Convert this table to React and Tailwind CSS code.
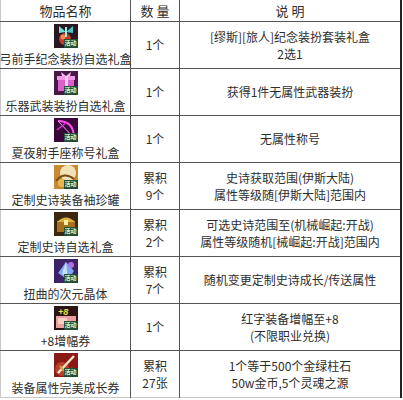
const font = { fontFamily: '"Noto Sans CJK SC", "Noto Sans", sans-serif' };

function Badge() {
  return (
    <span className="absolute right-0 bottom-0 flex h-[9px] w-[14px] items-center justify-center bg-[#234d33] text-[6px] font-bold leading-none text-[#d8f5d0]">
      活动
    </span>
  );
}

function ItemIcon({ kind }) {
  return (
    <div className="relative h-[24px] w-[24px] overflow-hidden bg-[#1e1418]">
      <svg width="24" height="24" viewBox="0 0 24 24" className="block">
        {kind === "bowgift" && (
          <>
            <rect width="24" height="24" fill="#2a1820" />
            <circle cx="11" cy="15" r="6" fill="#c43a2c" />
            <circle cx="9" cy="13" r="2.5" fill="#f08a50" />
            <path d="M12 8 L5 2 L5 9 Z" fill="#6fe0d6" />
            <path d="M12 8 L19 2 L19 9 Z" fill="#4cc4c0" />
            <rect x="11" y="3" width="2" height="10" fill="#8ff0e8" />
          </>
        )}
        {kind === "pinkbox" && (
          <>
            <rect width="24" height="24" fill="#4a1848" />
            <rect x="4" y="7" width="16" height="13" fill="#d863c8" />
            <rect x="3" y="5" width="18" height="4" fill="#f09ae6" />
            <rect x="11" y="5" width="3" height="15" fill="#f8c8f2" />
            <path d="M12 5 L7 1 L8 5 Z M12 5 L17 1 L16 5 Z" fill="#f8b8f0" />
          </>
        )}
        {kind === "bow" && (
          <>
            <rect width="24" height="24" fill="#3a0838" />
            <path d="M4 3 Q20 3 20 20" stroke="#ff4cf0" strokeWidth="2" fill="none" />
            <path d="M4 3 L20 20" stroke="#ff9af8" strokeWidth="1" />
            <path d="M3 12 L13 4" stroke="#e030d8" strokeWidth="1.5" />
          </>
        )}
        {kind === "swirl" && (
          <>
            <rect width="24" height="24" fill="#c88a30" />
            <circle cx="14" cy="8" r="8" fill="#f2e2b8" />
            <path d="M2 16 Q10 6 20 14" stroke="#7a4a18" strokeWidth="2" fill="none" />
            <circle cx="8" cy="18" r="4" fill="#e8b850" />
          </>
        )}
        {kind === "chest" && (
          <>
            <rect width="24" height="24" fill="#3a2810" />
            <rect x="3" y="9" width="18" height="11" fill="#a8701e" />
            <path d="M3 10 Q12 1 21 10 Z" fill="#e0b040" />
            <rect x="10" y="8" width="4" height="5" fill="#fff0a0" />
          </>
        )}
        {kind === "crystal" && (
          <>
            <rect width="24" height="24" fill="#3c2268" />
            <path d="M4 14 L12 3 L20 12 L14 21 Z" fill="#7fa8f0" />
            <path d="M12 3 L14 21 L8 14 Z" fill="#c8e0ff" />
            <circle cx="17" cy="6" r="3" fill="#b070e0" />
          </>
        )}
        {kind === "ticket" && (
          <>
            <rect width="24" height="24" fill="#2a1414" />
            <rect x="2" y="10" width="20" height="12" fill="#e8a0a0" />
            <rect x="4" y="12" width="9" height="6" fill="#f8d0c8" />
            <text x="4" y="9" fontSize="9" fontWeight="bold" fontStyle="italic" fill="#f0e040" fontFamily="Liberation Sans, sans-serif">
              +8
            </text>
          </>
        )}
        {kind === "sword" && (
          <>
            <rect width="24" height="24" fill="#8a1a16" />
            <circle cx="8" cy="16" r="7" fill="#b8402a" />
            <path d="M4 20 L20 3" stroke="#f4e2c0" strokeWidth="2.5" />
            <path d="M6 13 L10 18" stroke="#d8a050" strokeWidth="2" />
            <path d="M12 20 L18 14 L22 20 Z" fill="#3a8a40" />
          </>
        )}
      </svg>
      <Badge />
    </div>
  );
}

const rows = [
  { icon: "bowgift", name: "弓前手纪念装扮自选礼盒", count: ["1个"], desc: ["[缪斯][旅人]纪念装扮套装礼盒", "2选1"] },
  { icon: "pinkbox", name: "乐器武装装扮自选礼盒", count: ["1个"], desc: ["获得1件无属性武器装扮"] },
  { icon: "bow", name: "夏夜射手座称号礼盒", count: ["1个"], desc: ["无属性称号"] },
  { icon: "swirl", name: "定制史诗装备袖珍罐", count: ["累积", "9个"], desc: ["史诗获取范围(伊斯大陆)", "属性等级随[伊斯大陆]范围内"] },
  { icon: "chest", name: "定制史诗自选礼盒", count: ["累积", "2个"], desc: ["可选史诗范围至(机械崛起:开战)", "属性等级随机[械崛起:开战]范围内"] },
  { icon: "crystal", name: "扭曲的次元晶体", count: ["累积", "7个"], desc: ["随机变更定制史诗成长/传送属性"] },
  { icon: "ticket", name: "+8增幅券", count: ["1个"], desc: ["红字装备增幅至+8", "(不限职业兑换)"] },
  { icon: "sword", name: "装备属性完美成长券", count: ["累积", "27张"], desc: ["1个等于500个金绿柱石", "50w金币,5个灵魂之源"] },
];

export default function App() {
  return (
    <div className="h-[400px] w-[403px] overflow-hidden bg-white text-[#2e2e2e]" style={font}>
      <table className="w-[402px] table-fixed border-collapse border-l border-l-[#c8c8c8] border-r-2 border-r-[#222]">
        <colgroup>
          <col className="w-[130px]" />
          <col className="w-[49px]" />
          <col />
        </colgroup>
        <thead>
          <tr className="h-[21px] border-b border-[#555] text-[13px] leading-none">
            <th className="border-r border-[#555] font-normal">物品名称</th>
            <th className="border-r border-[#555] font-normal">数 量</th>
            <th className="font-normal">说 明</th>
          </tr>
        </thead>
        <tbody>
          {rows.map((r, i) => (
            <tr
              key={i}
              className={`h-[47px] border-b ${i === rows.length - 1 ? "border-[#c8c8c8]" : "border-[#555]"}`}
            >
              <td className="border-r border-[#555] p-0">
                <div className="flex flex-col items-center">
                  <ItemIcon kind={r.icon} />
                  <span className="mt-[3px] whitespace-nowrap text-[12px] leading-[15px]">{r.name}</span>
                </div>
              </td>
              <td className="border-r border-[#555] p-0 text-center text-[12px] leading-[17px]">
                {r.count.map((c, j) => (
                  <div key={j}>{c}</div>
                ))}
              </td>
              <td className="p-0 text-center text-[12px] leading-[17px]">
                {r.desc.map((d, j) => (
                  <div key={j} className="whitespace-nowrap">{d}</div>
                ))}
              </td>
            </tr>
          ))}
        </tbody>
      </table>
    </div>
  );
}
